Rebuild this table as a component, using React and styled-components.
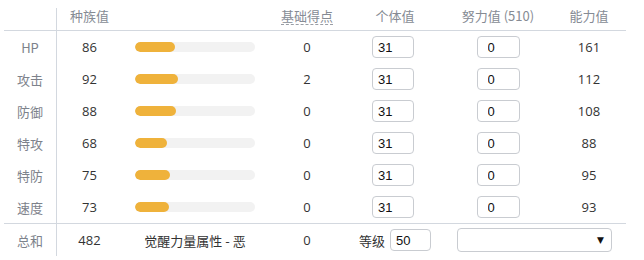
import React from "react";
import styled, { createGlobalStyle } from "styled-components";

const GlobalStyle = createGlobalStyle`
  html, body { margin: 0; padding: 0; background: #fff; }
  body {
    font-family: "Open Sans", "Noto Sans CJK SC", sans-serif;
    font-size: 13px;
    color: #333;
  }
`;

const COLS = "53px 65px 146px 78px 98px 108px 74px";

const Table = styled.div`
  width: 622px;
  padding-left: 4px;
`;

const Row = styled.div`
  display: grid;
  grid-template-columns: ${COLS};
  height: ${(p) => p.$h}px;
  border-bottom: ${(p) => (p.$line ? "1px solid #d3d8df" : "none")};
  box-sizing: content-box;
`;

const Cell = styled.div`
  display: flex;
  align-items: center;
  justify-content: ${(p) => p.$justify || "center"};
  padding: ${(p) => p.$pad || "0"};
  grid-column: ${(p) => (p.$span ? `span ${p.$span}` : "auto")};
  color: ${(p) => (p.$muted ? "#7d828b" : "#333")};
  font-family: "Noto Sans CJK SC", sans-serif;
  font-size: 13px;
  white-space: nowrap;
  gap: 5px;
`;

const LabelCell = styled(Cell)`
  border-right: 1px solid #d3d8df;
  color: #7d828b;
`;

const HeadCorner = styled.div`
  border-right: 1px solid #d3d8df;
  margin-top: 8px;
`;

const HeadCell = styled(Cell)`
  color: #868b94;
  padding-top: 1px;
`;

const Dotted = styled.span`
  border-bottom: 1px dashed #9a9ea6;
  line-height: 17px;
`;

const Num = styled.span`
  font-family: "Open Sans", sans-serif;
  font-size: 13px;
  color: #333;
`;

const Track = styled.div`
  width: 120px;
  height: 10px;
  border-radius: 5px;
  background: #f2f2f2;
  overflow: hidden;
`;

const Fill = styled.div`
  height: 100%;
  border-radius: 5px;
  background: #efb23b;
`;

const Field = styled.input`
  box-sizing: border-box;
  width: ${(p) => p.$w || 42}px;
  height: 22px;
  border: 1px solid #c9ccd1;
  border-radius: 4px;
  padding: 0 0 0 ${(p) => p.$indent || 5}px;
  font-family: "Liberation Sans", Arial, sans-serif;
  font-size: 13px;
  color: #111;
  background: #fff;
  outline: none;
`;

const SelectBox = styled.div`
  box-sizing: border-box;
  width: 155px;
  height: 24px;
  border: 1px solid #c9ccd1;
  border-radius: 4px;
  display: flex;
  align-items: center;
  justify-content: flex-end;
  padding-right: 7px;
  font-size: 9px;
  color: #111;
  font-family: "DejaVu Sans", sans-serif;
`;

const stats = [
  { name: "HP", base: 86, pt: 0, stat: 161 },
  { name: "攻击", base: 92, pt: 2, stat: 112 },
  { name: "防御", base: 88, pt: 0, stat: 108 },
  { name: "特攻", base: 68, pt: 0, stat: 88 },
  { name: "特防", base: 75, pt: 0, stat: 95 },
  { name: "速度", base: 73, pt: 0, stat: 93 },
];

export default function App() {
  const total = stats.reduce((s, r) => s + r.base, 0);
  return (
    <>
      <GlobalStyle />
      <Table>
        <Row $h={30} $line>
          <HeadCorner />
          <HeadCell>种族值</HeadCell>
          <HeadCell />
          <HeadCell>
            <Dotted>基础得点</Dotted>
          </HeadCell>
          <HeadCell>个体值</HeadCell>
          <HeadCell>努力值 (510)</HeadCell>
          <HeadCell>能力值</HeadCell>
        </Row>
        {stats.map((r, i) => (
          <Row key={r.name} $h={32} $line={i === stats.length - 1}>
            <LabelCell>{r.name}</LabelCell>
            <Cell>
              <Num>{r.base}</Num>
            </Cell>
            <Cell>
              <Track>
                <Fill style={{ width: `${(r.base / 255) * 120}px` }} />
              </Track>
            </Cell>
            <Cell>
              <Num>{r.pt}</Num>
            </Cell>
            <Cell $pad="0 4px 0 0">
              <Field defaultValue="31" $w={42} />
            </Cell>
            <Cell>
              <Field defaultValue="0" $w={43} $indent={10} />
            </Cell>
            <Cell>
              <Num>{r.stat}</Num>
            </Cell>
          </Row>
        ))}
        <Row $h={32}>
          <LabelCell>总和</LabelCell>
          <Cell>
            <Num>{total}</Num>
          </Cell>
          <Cell>觉醒力量属性 - 恶</Cell>
          <Cell>
            <Num>0</Num>
          </Cell>
          <Cell $pad="0 0 0 0">
            等级
            <Field defaultValue="50" $w={41} />
          </Cell>
          <Cell $span={2} $justify="flex-end" $pad="0 14px 0 0">
            <SelectBox>▼</SelectBox>
          </Cell>
        </Row>
      </Table>
    </>
  );
}
